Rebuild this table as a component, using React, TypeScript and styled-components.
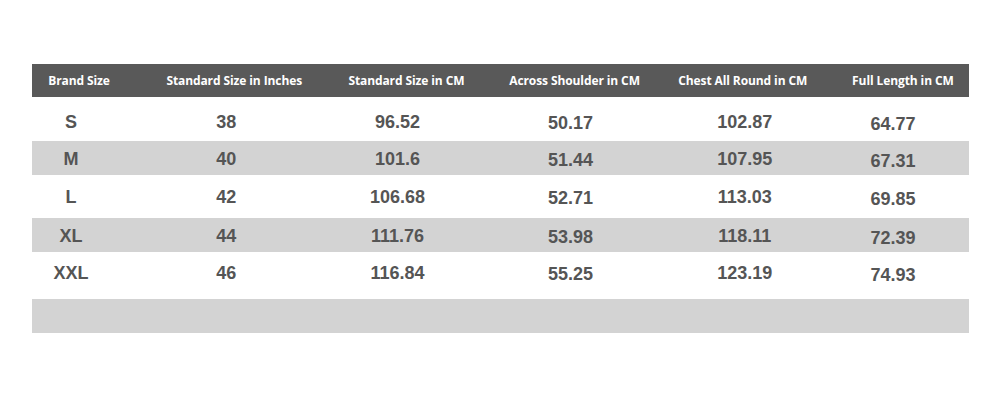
import React from 'react';
import styled, { createGlobalStyle } from 'styled-components';

const GlobalStyle = createGlobalStyle`
  html, body {
    margin: 0;
    padding: 0;
    background: #ffffff;
  }
  body {
    font-family: 'Open Sans', 'Liberation Sans', sans-serif;
  }
`;

// headers and values are not centred alike in the chart, so each column keeps its own offsets
const columns = [
  { title: 'Brand Size', head: -31, value: -39, drop: 0 },
  { title: 'Standard Size in Inches', head: -32, value: -40, drop: 0 },
  { title: 'Standard Size in CM', head: -16, value: -25, drop: 0 },
  { title: 'Across Shoulder in CM', head: -4, value: -8, drop: 1 },
  { title: 'Chest All Round in CM', head: 8, value: 10, drop: 0 },
  { title: 'Full Length in CM', head: 12, value: 2, drop: 2 },
];

const rows = [
  { cells: ['S', '38', '96.52', '50.17', '102.87', '64.77'], height: 44, drop: 3 },
  { cells: ['M', '40', '101.6', '51.44', '107.95', '67.31'], height: 34, drop: 1 },
  { cells: ['L', '42', '106.68', '52.71', '113.03', '69.85'], height: 43, drop: 1 },
  { cells: ['XL', '44', '111.76', '53.98', '118.11', '72.39'], height: 34, drop: 1 },
  { cells: ['XXL', '46', '116.84', '55.25', '123.19', '74.93'], height: 47, drop: -2 },
  { cells: ['', '', '', '', '', ''], height: 34, drop: 0 },
];

const Page = styled.div`
  width: 1000px;
  height: 400px;
  padding: 64px 0 0 32px;
  box-sizing: border-box;
`;

const Table = styled.div`
  width: 937px;
  display: flex;
  flex-direction: column;
`;

const HeaderRow = styled.div`
  display: grid;
  grid-template-columns: repeat(6, 1fr);
  height: 33px;
  background: #595959;
  align-items: center;
`;

const HeaderCell = styled.div<{ $shift: number }>`
  color: #ffffff;
  font-size: 12px;
  font-weight: 700;
  text-align: center;
  letter-spacing: -0.1px;
  white-space: nowrap;
  transform: translateX(${p => p.$shift}px);
`;

const Row = styled.div<{ $shaded: boolean; $height: number }>`
  display: grid;
  grid-template-columns: repeat(6, 1fr);
  height: ${p => p.$height}px;
  background: ${p => (p.$shaded ? '#d3d3d3' : '#ffffff')};
  align-items: center;
`;

const Cell = styled.div<{ $x: number; $y: number }>`
  color: #555555;
  font-family: 'Liberation Sans', Arial, sans-serif;
  font-size: 18px;
  font-weight: 700;
  text-align: center;
  white-space: nowrap;
  transform: translate(${p => p.$x}px, ${p => p.$y}px);
`;

export default function App() {
  return (
    <>
      <GlobalStyle />
      <Page>
        <Table>
          <HeaderRow>
            {columns.map(c => (
              <HeaderCell key={c.title} $shift={c.head}>
                {c.title}
              </HeaderCell>
            ))}
          </HeaderRow>
          {rows.map((r, i) => (
            <Row key={i} $shaded={i % 2 === 1} $height={r.height}>
              {r.cells.map((v, j) => (
                <Cell key={j} $x={columns[j].value} $y={r.drop + columns[j].drop}>
                  {v}
                </Cell>
              ))}
            </Row>
          ))}
        </Table>
      </Page>
    </>
  );
}
